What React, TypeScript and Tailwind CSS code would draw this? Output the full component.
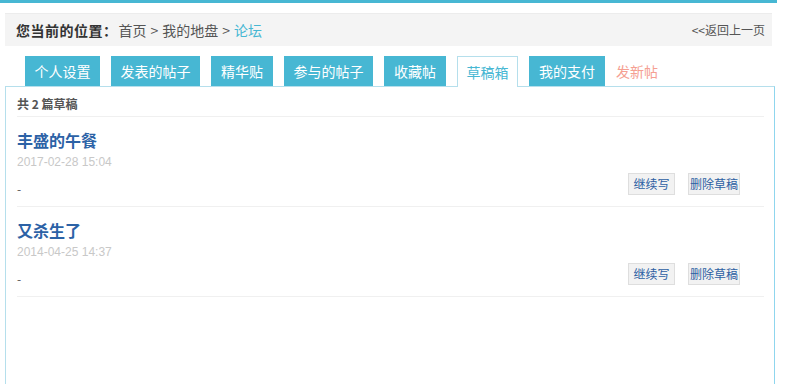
import React from 'react';

const tabs = [
  { label: '个人设置', w: 'w-[75px]' },
  { label: '发表的帖子', w: 'w-[89px]' },
  { label: '精华贴', w: 'w-[62px]' },
  { label: '参与的帖子', w: 'w-[89px]' },
  { label: '收藏帖', w: 'w-[62px]' },
  { label: '草稿箱', w: 'w-[61px]', active: true },
  { label: '我的支付', w: 'w-[76px]' },
];

const drafts = [
  { title: '丰盛的午餐', date: '2017-02-28 15:04' },
  { title: '又杀生了', date: '2014-04-25 14:37' },
];

const App: React.FC = () => {
  return (
    <div className="w-[800px] h-[384px] overflow-hidden bg-white font-['Noto_Sans_CJK_SC',sans-serif] text-[#333]">
      <div className="w-[777px]">
        <div className="h-[3px] bg-[#47b7d3]" />

        <div className="mx-[5px] mt-[10px] h-[33px] bg-[#f4f4f4] border-t border-[#ececec] flex items-center justify-between pl-[11px] pr-[7px]">
          <div className="flex items-center text-[14px] leading-none">
            <span className="font-bold text-[#333] tracking-[0.5px]">您当前的位置：</span>
            <span className="text-[#555] ml-[1px]">首页</span>
            <span className="text-[#555] mx-[4px]">&gt;</span>
            <span className="text-[#555]">我的地盘</span>
            <span className="text-[#555] mx-[4px]">&gt;</span>
            <span className="text-[#47b7d3]">论坛</span>
          </div>
          <a href="#" className="text-[12px] text-[#555]">&lt;&lt;返回上一页</a>
        </div>

        <div className="ml-[25px] mt-[10px] flex items-end gap-[11px] h-[30px]">
          {tabs.map((t) =>
            t.active ? (
              <div
                key={t.label}
                className={`${t.w} relative z-10 h-[31px] -mb-px flex items-center justify-center bg-white border border-b-0 border-[#b5dfec] text-[14px] text-[#47b7d3]`}
              >
                {t.label}
              </div>
            ) : (
              <div key={t.label} className={`${t.w} h-[30px] flex items-center justify-center bg-[#47b7d3] text-[14px] text-white`}>
                {t.label}
              </div>
            )
          )}
          <div className="h-[30px] flex items-center text-[14px] text-[#f5a092]">发新帖</div>
        </div>

        <div className="ml-[5px] w-[770px] h-[300px] border border-[#b5dfec] border-r-[#8fd6ee] border-b-0 pl-[11px] pr-[10px]">
          <div className="h-[30px] flex items-center pt-[4px] border-b border-[#f0f0f0] text-[12px] font-bold text-[#555]">
            共 2 篇草稿
          </div>
          {drafts.map((d) => (
            <div key={d.title} className="h-[90px] border-b border-[#f0f0f0] pt-[13px]">
              <div className="text-[16px] leading-[20px] font-bold text-[#2c62a6]">{d.title}</div>
              <div className="mt-[3px] text-[12px] leading-[18px] text-[#c8c8c8] font-['Liberation_Sans',sans-serif]">{d.date}</div>
              <div className="mt-[2px] flex items-end justify-between pr-[24px]">
                <span className="text-[12px] leading-none text-[#555]">-</span>
                <div className="flex gap-[13px]">
                  <button className="h-[22px] w-[47px] bg-[#f2f2f2] border border-[#dedede] text-[12px] text-[#2c5fa3]">继续写</button>
                  <button className="h-[22px] w-[52px] bg-[#f2f2f2] border border-[#dedede] text-[12px] text-[#2c5fa3]">删除草稿</button>
                </div>
              </div>
            </div>
          ))}
        </div>
      </div>
    </div>
  );
};

export default App;
